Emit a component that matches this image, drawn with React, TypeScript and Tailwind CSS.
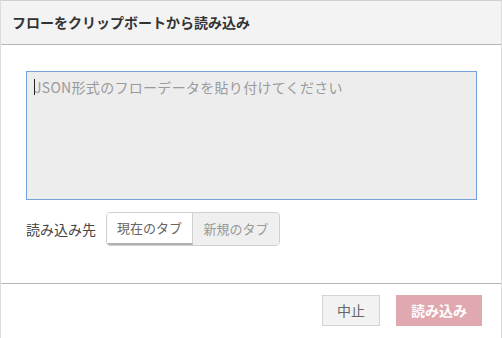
import React from "react";

export default function App() {
  const font = { fontFamily: '"Noto Sans CJK JP", "Noto Sans", sans-serif' };
  return (
    <div className="w-[502px] h-[338px] bg-white" style={font}>
      <div className="w-[502px] h-[338px] flex flex-col border-x border-[#dcdcdc] border-t border-t-[#d0d0d0]">
        <div className="h-[44px] shrink-0 bg-[#f3f3f3] border-b border-[#b5b5b5] flex items-center pl-[11px] text-[14px] font-bold text-[#333]">
          フローをクリップボートから読み込み
        </div>
        <div className="px-[25px] pt-[26px] h-[239px] border-b border-[#b5b5b5]">
          <div className="relative">
            <textarea
              className="block w-[451px] h-[129px] resize-none bg-[#ededed] border border-[#74a2dc] px-[7px] py-[5px] text-[14px] leading-[20px] tracking-[0.3px] text-[#333] placeholder:text-[#9a9a9a] outline-none"
              placeholder="JSON形式のフローデータを貼り付けてください"
            />
            <span className="absolute left-[8px] top-[8px] w-[1px] h-[16px] bg-[#222]" />
          </div>
          <div className="flex items-center mt-[12px]">
            <span className="text-[14px] text-[#444] w-[80px]">読み込み先</span>
            <div className="flex h-[34px] border border-[#cfcfcf] rounded-[4px] overflow-hidden text-[13px]">
              <div className="w-[86px] flex items-center justify-center bg-white text-[#666] border-r border-[#cfcfcf] border-b-2 border-b-[#b0b0b0]">
                現在のタブ
              </div>
              <div className="w-[86px] flex items-center justify-center bg-[#efefef] text-[#999]">
                新規のタブ
              </div>
            </div>
          </div>
        </div>
        <div className="flex justify-end gap-[16px] pt-[11px] pr-[19px]">
          <button className="w-[58px] h-[31px] bg-[#f2f2f2] border border-[#d4d4d4] text-[14px] text-[#666]">
            中止
          </button>
          <button className="w-[86px] h-[31px] bg-[#e0a9b0] text-[14px] font-bold text-white">
            読み込み
          </button>
        </div>
      </div>
    </div>
  );
}
